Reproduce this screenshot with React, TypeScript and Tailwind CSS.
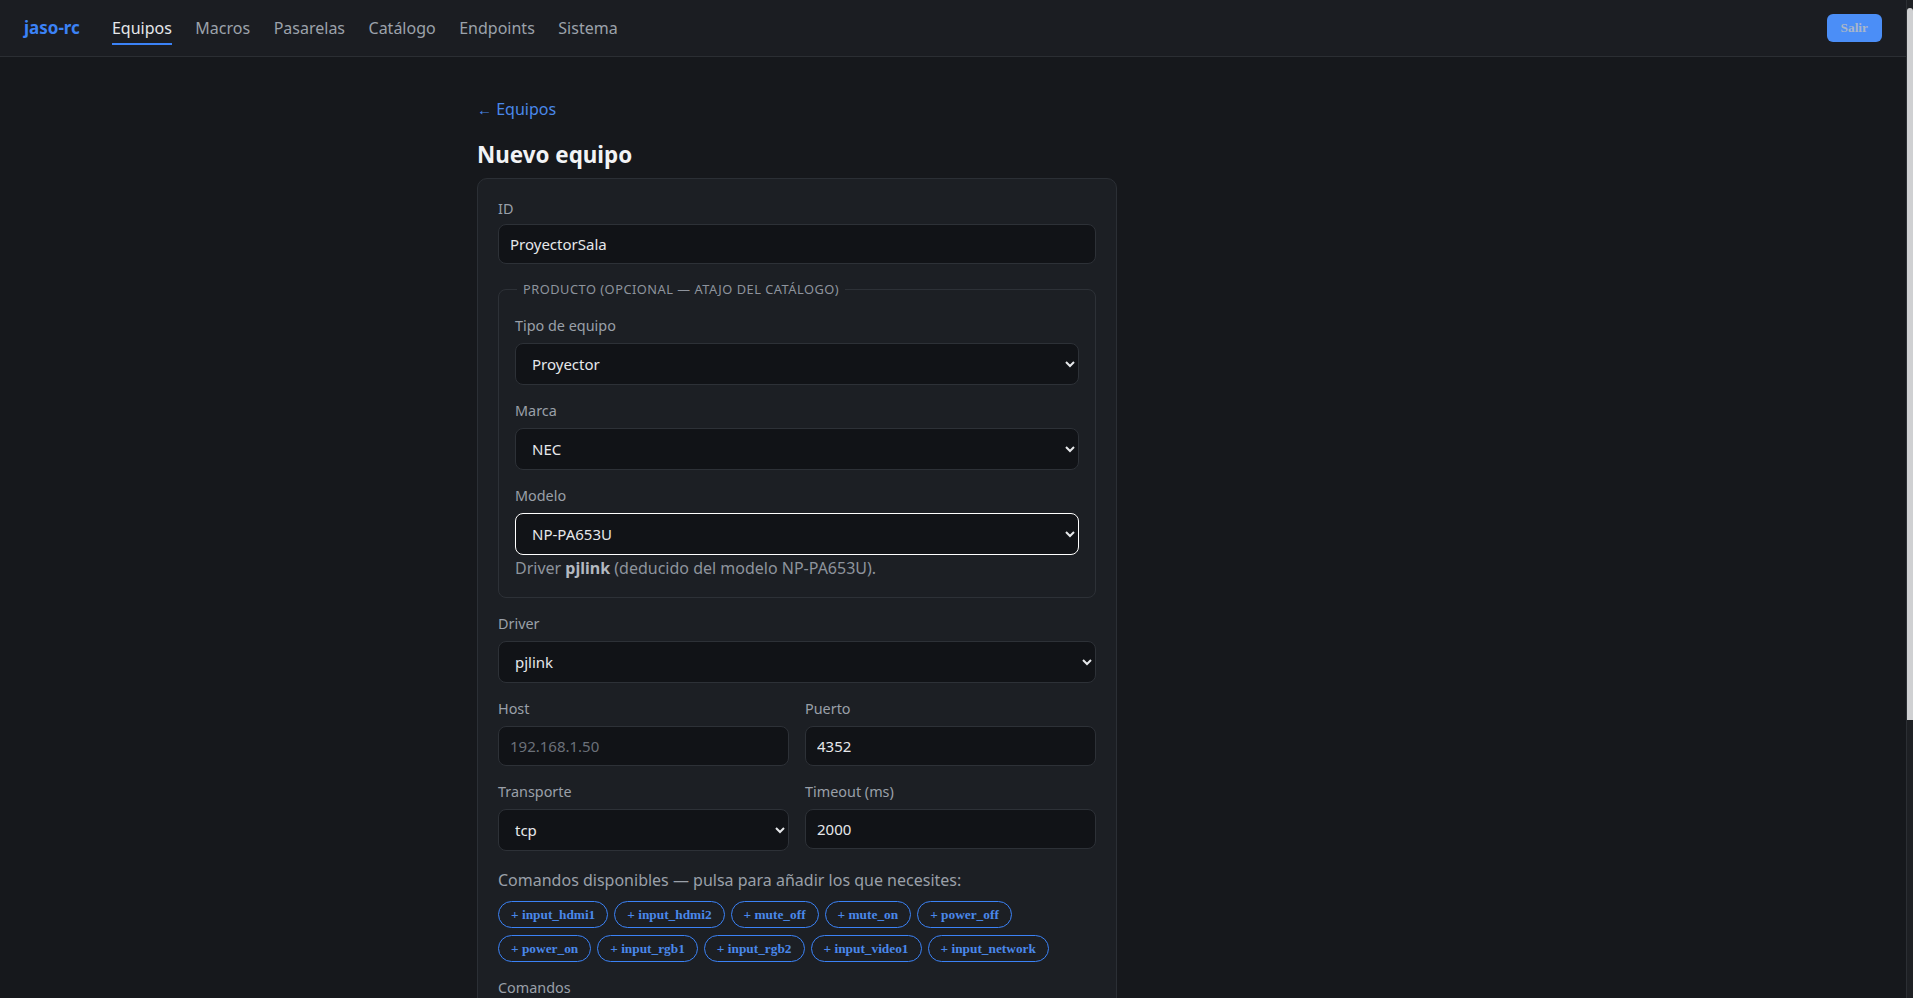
import { useState } from "react";

const navItems = ["Equipos", "Macros", "Pasarelas", "Catálogo", "Endpoints", "Sistema"];

const availableCommands = [
  "input_hdmi1",
  "input_hdmi2",
  "mute_off",
  "mute_on",
  "power_off",
  "power_on",
  "input_rgb1",
  "input_rgb2",
  "input_video1",
  "input_network",
];

const inputCls =
  "h-10 w-full rounded-lg border border-[#2d3137] bg-[#111317] px-[11px] text-[15px] text-[#e6e8eb] outline-none placeholder:text-[#6b7079]";
const selectCls =
  "h-[42px] w-full rounded-lg border border-[#2d3137] bg-[#111317] pl-3 pr-2 text-[15px] text-[#e6e8eb] outline-none";
const labelCls = "mb-[7px] block text-[14.4px] leading-5 text-[#9aa0a9]";

function Field({ label, children }: { label: string; children: React.ReactNode }) {
  return (
    <div>
      <label className={labelCls}>{label}</label>
      {children}
    </div>
  );
}

export default function App() {
  const [id, setId] = useState("ProyectorSala");
  const [commands, setCommands] = useState("");

  return (
    <div
      className="flex h-screen bg-[#16181c] text-[#e6e8eb]"
      style={{ fontFamily: '"Noto Sans", "Liberation Sans", sans-serif' }}
    >
      <div className="min-w-0 flex-1 overflow-y-auto">
        {/* Top bar */}
        <header className="flex h-[57px] items-center border-b border-[#2b2e33] bg-[#1b1d22] px-6">
          <span className="mr-8 text-[17px] font-bold text-[#3b82f6]">jaso-rc</span>
          <nav className="flex items-center gap-[23.5px]">
            {navItems.map((item) => (
              <a
                key={item}
                className={`border-b-2 pt-[5px] pb-[3px] text-base ${
                  item === "Equipos"
                    ? "border-[#3b82f6] text-[#e6e8eb]"
                    : "border-transparent text-[#9ca2ab]"
                }`}
              >
                {item}
              </a>
            ))}
          </nav>
          <button
            className="ml-auto rounded-md bg-[#4b8ef7] px-[14px] py-1.5 text-[13.333px] font-bold leading-4 text-[#a9b6c9]"
            style={{ fontFamily: '"Liberation Serif", serif' }}
          >
            Salir
          </button>
        </header>

        <main className="mx-auto max-w-[1000px] px-6 pt-10 pb-20">
          <div className="max-w-[640px]">
            <a className="text-base leading-6 text-[#4a88ea]">
              <span className="text-[15px]">←</span> Equipos
            </a>
            <h1 className="mt-[19px] mb-2 text-[22.4px] font-bold leading-[30px] text-[#f2f3f5]">
              Nuevo equipo
            </h1>

            <div className="rounded-[10px] border border-[#2b2f35] bg-[#1c1f24] p-5">
              <div>
                <label className="mb-[5px] block text-[14.4px] leading-5 text-[#9aa0a9]">ID</label>
                <input className={inputCls} value={id} onChange={(e) => setId(e.target.value)} />
              </div>

              <fieldset className="mt-4 rounded-lg border border-[#2d3137] px-4 pt-[18px] pb-[18px]">
                <legend className="ml-0.5 px-1.5 text-[12.8px] uppercase leading-[18px] tracking-[0.04em] text-[#8e949d]">
                  Producto (opcional — atajo del catálogo)
                </legend>
                <div className="flex flex-col gap-4">
                  <Field label="Tipo de equipo">
                    <select className={selectCls} defaultValue="Proyector">
                      <option>Proyector</option>
                    </select>
                  </Field>
                  <Field label="Marca">
                    <select className={selectCls} defaultValue="NEC">
                      <option>NEC</option>
                    </select>
                  </Field>
                  <div>
                    <label className={labelCls}>Modelo</label>
                    <select
                      className={`${selectCls} border-white outline-1 outline-white`}
                      defaultValue="NP-PA653U"
                    >
                      <option>NP-PA653U</option>
                    </select>
                    <p className="mt-0.5 text-base leading-[22px] text-[#8e949d]">
                      Driver <strong className="font-bold text-[#b4b9c0]">pjlink</strong> (deducido
                      del modelo NP-PA653U).
                    </p>
                  </div>
                </div>
              </fieldset>

              <div className="mt-4 flex flex-col gap-4">
                <Field label="Driver">
                  <select className={selectCls} defaultValue="pjlink">
                    <option>pjlink</option>
                  </select>
                </Field>

                <div className="grid grid-cols-2 gap-4">
                  <Field label="Host">
                    <input className={inputCls} placeholder="192.168.1.50" />
                  </Field>
                  <Field label="Puerto">
                    <input className={inputCls} defaultValue="4352" />
                  </Field>
                  <Field label="Transporte">
                    <select className={selectCls} defaultValue="tcp">
                      <option>tcp</option>
                      <option>udp</option>
                    </select>
                  </Field>
                  <Field label="Timeout (ms)">
                    <input className={inputCls} defaultValue="2000" />
                  </Field>
                </div>
              </div>

              <p className="mt-[18px] text-base leading-[22px] text-[#9aa0a9]">
                Comandos disponibles — pulsa para añadir los que necesites:
              </p>
              <div className="mt-2.5 flex flex-wrap gap-x-1.5 gap-y-[7px]">
                {availableCommands.map((cmd) => (
                  <button
                    key={cmd}
                    onClick={() => setCommands((c) => (c ? c + "\n" : "") + cmd + "=")}
                    className="rounded-full border border-[#3b82f6] px-3 py-[5px] text-[13.333px] font-bold leading-[15px] text-[#4a88ea]"
                    style={{ fontFamily: '"Liberation Serif", serif' }}
                  >
                    + {cmd}
                  </button>
                ))}
              </div>

              <div className="mt-4">
                <label className={labelCls}>Comandos</label>
                <textarea
                  className="h-[220px] w-full rounded-lg border border-[#2d3137] bg-[#111317] p-3 font-mono text-sm text-[#e6e8eb] outline-none"
                  value={commands}
                  onChange={(e) => setCommands(e.target.value)}
                />
              </div>

              <div className="mt-4 flex gap-2">
                <button className="h-10 rounded-lg bg-[#3b82f6] px-5 text-[15px] font-semibold text-white">
                  Guardar
                </button>
                <button className="h-10 rounded-lg border border-[#2d3137] px-5 text-[15px] text-[#c3c7cd]">
                  Cancelar
                </button>
              </div>
            </div>
          </div>
        </main>
      </div>

      {/* window scrollbar */}
      <aside className="w-[7px] shrink-0 border-l border-[#2c2f34] bg-[#1e2024] pt-2">
        <div className="h-[712px] rounded-t-[3px] bg-[#cfd0d2]" />
      </aside>
    </div>
  );
}
